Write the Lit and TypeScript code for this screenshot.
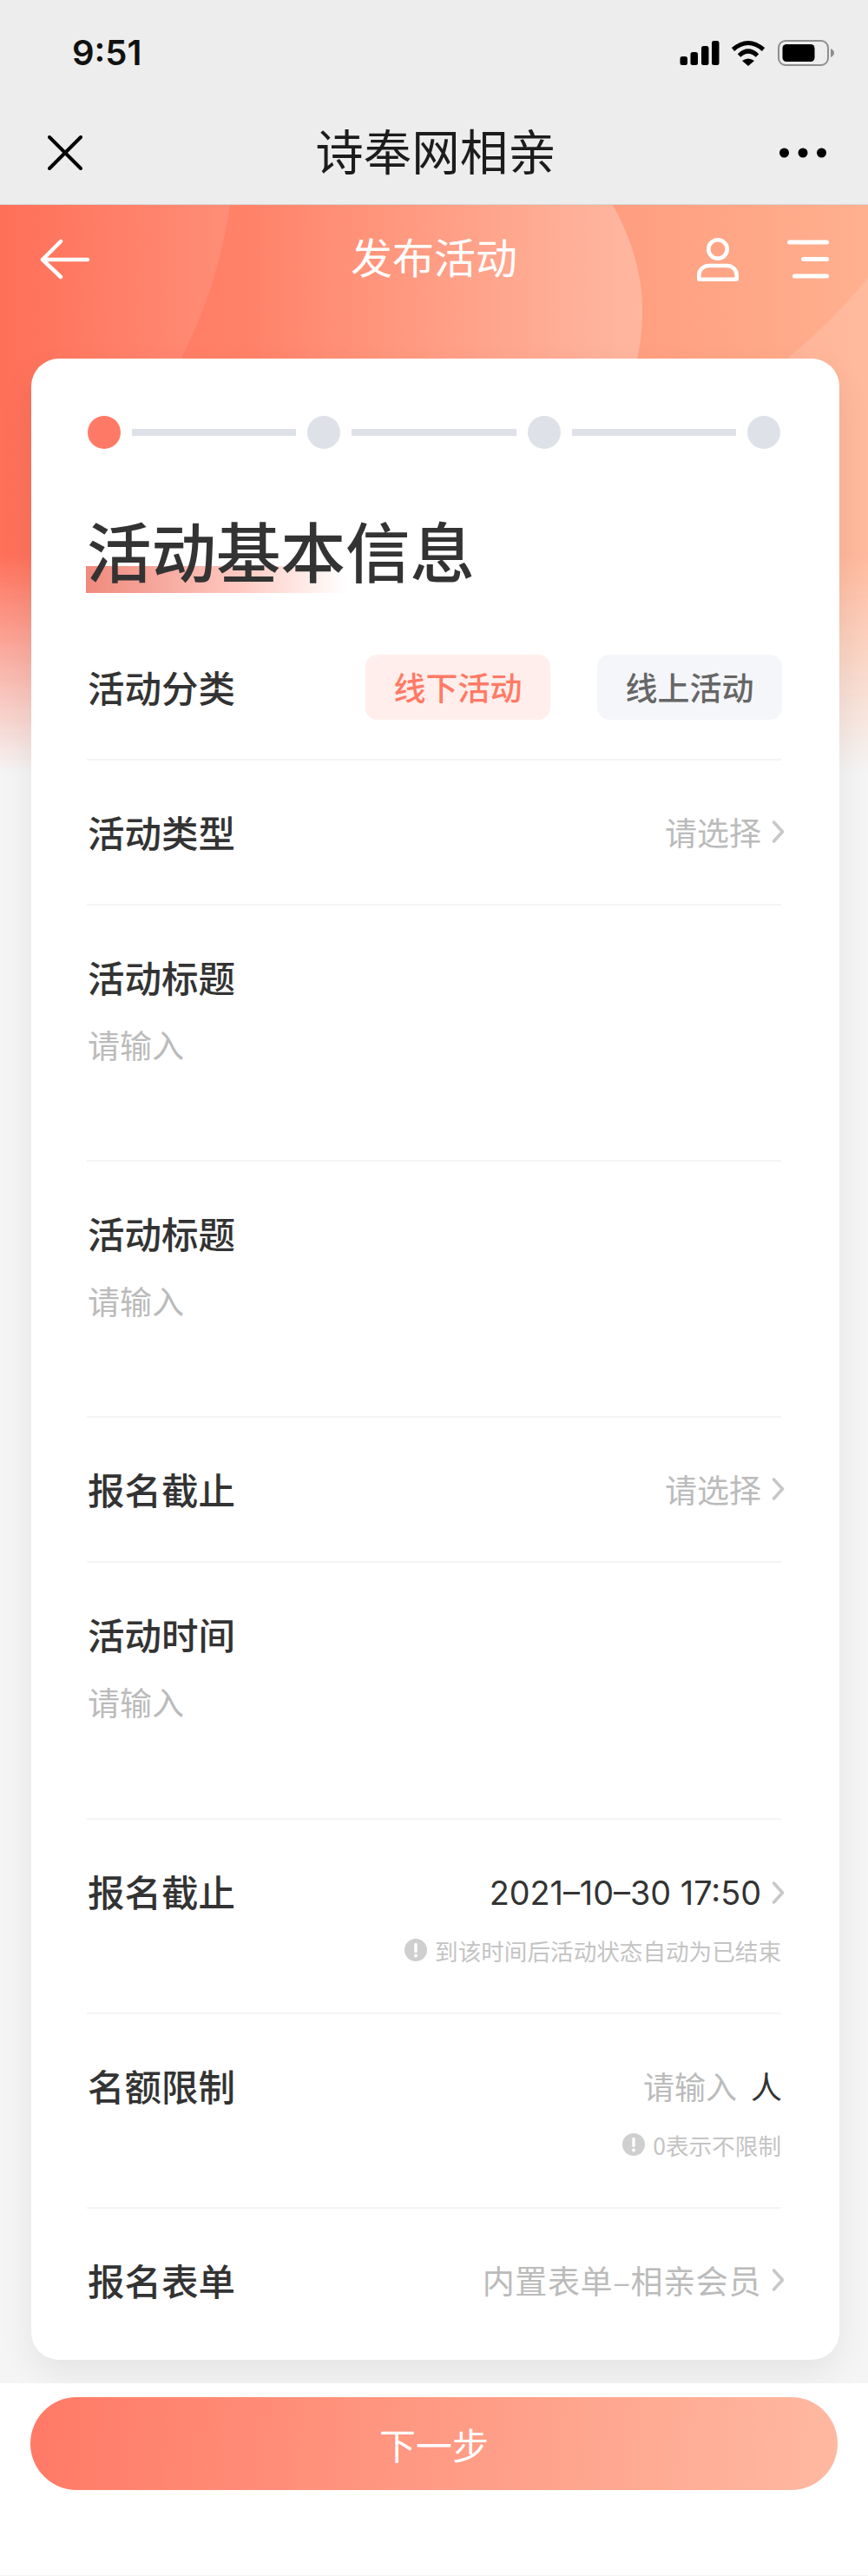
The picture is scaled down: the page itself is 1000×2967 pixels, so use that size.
import { LitElement, html, css, svg } from "lit";
import { customElement } from "lit/decorators.js";

const chevron = html`<svg class="chev" width="15" height="26" viewBox="0 0 15 26"><path d="M2.5 2 L12.5 13 L2.5 24" fill="none" stroke="#c8c8c8" stroke-width="3.6" stroke-linecap="round" stroke-linejoin="round"/></svg>`;
const alertIcon = html`<svg class="alert" width="26" height="26" viewBox="0 0 26 26"><circle cx="13" cy="13" r="13" fill="#cfcfcf"/><path d="M13 6.5 V14.5" stroke="#fff" stroke-width="3.4" stroke-linecap="round"/><circle cx="13" cy="19.5" r="2" fill="#fff"/></svg>`;

@customElement("app-root")
export class AppRoot extends LitElement {
  static styles = css`
    :host {
      display: block;
      width: 1000px;
      min-height: 2967px;
      background: #f5f5f5;
      font-family: "Noto Sans CJK SC", "Noto Sans", sans-serif;
      color: #333;
    }
    * { box-sizing: border-box; }
    .top { background: #ededed; border-bottom: 1px solid #d8d8d8; height: 236px; }
    .status { height: 122px; display: flex; align-items: center; justify-content: space-between; padding: 0 38px 0 83px; }
    .time { font-family: Inter, "Liberation Sans", sans-serif; font-size: 40px; font-weight: 600; color: #111; line-height: 1; }
    .sys { display: flex; align-items: center; }
    .sys .wifi { margin-left: 13px; }
    .sys .batt { margin-left: 14px; }
    .wx { height: 108px; display: grid; grid-template-columns: 1fr auto 1fr; align-items: center; padding: 0 48px 0 55px; }
    .wx-title { font-size: 55.5px; line-height: 70px; color: #1c1c1c; margin: -8px 3px 0 0; }
    .wx .more { justify-self: end; }
    .page { position: relative; }
    .hero { position: absolute; left: 0; top: 0; width: 1000px; height: 654px;
      -webkit-mask-image: linear-gradient(to bottom, #000 0, #000 404px, transparent 654px);
      mask-image: linear-gradient(to bottom, #000 0, #000 404px, transparent 654px); }
    .hero svg { display: block; }
    .content { position: relative; }
    .nav { height: 126px; display: grid; grid-template-columns: 1fr auto 1fr; align-items: center; padding: 0 45px; margin-bottom: 51px; }
    .nav-title { font-size: 48px; color: #fff; line-height: 60px; margin-top: -10px; }
    .nav-right { justify-self: end; display: flex; align-items: center; gap: 56px; }
    .card { width: 931px; margin-left: 36px; background: #fff; border-radius: 32px;
      padding: 66px 67px 63px 64px; box-shadow: 0 16px 40px rgba(0,0,0,.07); }
    .stepper { display: flex; align-items: center; gap: 13px; margin: 0 1px; }
    .dot { width: 38px; height: 38px; border-radius: 50%; background: #dfe1e9; flex: none; }
    .dot.on { background: #ff7a66; }
    .bar { flex: 1; height: 8px; background: #dfe1e9; }
    .title { position: relative; isolation: isolate; margin-top: 66px; margin-bottom: 3px; font-size: 74.5px; line-height: 100px; font-weight: 500; color: #333; }
    .title::before { content: ""; position: absolute; z-index: -1; left: -1px; bottom: 0; width: 300px; height: 31px;
      background: linear-gradient(90deg, #ef8a7c, rgba(255,150,135,.5) 60%, rgba(255,255,255,0)); }
    .row { border-bottom: 2px solid #f4f4f4; padding-top: 53px; }
    .label { font-size: 42.5px; font-weight: 500; line-height: 58px; color: #333; margin-left: 1px; }
    .row.row1 { display: flex; align-items: center; justify-content: space-between; padding: 68px 0 45px; }
    .row1 .label { margin-top: -2px; }
    .tabs { display: flex; gap: 54px; margin-right: -1px; }
    .tab { width: 213px; height: 75px; border-radius: 14px; display: flex; align-items: center; justify-content: center;
      padding-bottom: 2px; font-size: 37px; font-weight: 500; background: #f5f6fa; color: #666; }
    .tab.on { background: #ffeeeb; color: #ff7a66; }
    .line { display: flex; align-items: center; justify-content: space-between; }
    .short { height: 167px; }
    .tall { height: 295px; }
    .tall.more { height: 296px; }
    .mid { height: 224px; }
    .last { border-bottom: 0; }
    .ph { font-size: 37px; line-height: 50px; color: #bbb; margin: 24px 0 0 1px; }
    .val { display: flex; align-items: center; font-size: 37px; color: #bbb; line-height: 58px; }
    .chev { margin: 0 -4px 0 12px; flex: none; }
    .val.date { font-family: Inter, "Liberation Sans", sans-serif; font-size: 37.8px; color: #333; line-height: 54px; padding-top: 4px; }
    .val.input { font-size: 36px; margin-right: -1px; }
    .val.wide { letter-spacing: .6px; }
    .unit { color: #333; margin-left: 16px; }
    .hint { display: flex; align-items: center; justify-content: flex-end; margin-top: 21px; height: 36px; font-size: 26.6px; color: #c4c4c4; }
    .alert { margin-right: 9px; flex: none; }
    .footer { margin-top: 27px; background: #fff; height: 221px; padding: 16px 35px 0; position: relative; }
    .next { height: 107px; width: 930px; border-radius: 54px; background: linear-gradient(95deg, #ff7a66, #ffb9a1);
      color: #fff; font-size: 42px; display: flex; align-items: center; justify-content: center; }
  `;

  private field(label: string, right: unknown) {
    return html`<div class="line"><div class="label">${label}</div>${right}</div>`;
  }

  render() {
    return html`
      <div class="top">
        <div class="status">
          <div class="time">9:51</div>
          <div class="sys">
            <svg width="46" height="30" viewBox="0 0 46 30" fill="#000">
              <rect x="0.5" y="19" width="8.5" height="10" rx="2.5"/>
              <rect x="12.5" y="14" width="8.5" height="15" rx="2.5"/>
              <rect x="25" y="7" width="8.5" height="22" rx="2.5"/>
              <rect x="37" y="1" width="8.5" height="28" rx="2.5"/>
            </svg>
            <svg class="wifi" width="40" height="30" viewBox="0 0 40 30">
              <path d="M2.5 11 Q20 -4 37.5 11" fill="none" stroke="#000" stroke-width="5"/>
              <path d="M9.5 18 Q20 8 30.5 18" fill="none" stroke="#000" stroke-width="5"/>
              <path d="M13 24 Q20 19 27 24 L20 30Z" fill="#000"/>
            </svg>
            <svg class="batt" width="66" height="30" viewBox="0 0 66 30">
              <rect x="1" y="1" width="57" height="28" rx="8" fill="none" stroke="#8e8e8e" stroke-width="2"/>
              <rect x="5.5" y="5" width="37" height="20" rx="4.5" fill="#000"/>
              <path d="M61 10 Q65 12 65 15 Q65 18 61 20Z" fill="#8e8e8e"/>
            </svg>
          </div>
        </div>
        <div class="wx">
          <svg width="40" height="40" viewBox="0 0 40 40"><path d="M2 2 L38 38 M38 2 L2 38" stroke="#000" stroke-width="4" stroke-linecap="round"/></svg>
          <div class="wx-title">诗奉网相亲</div>
          <svg class="more" width="54" height="12" viewBox="0 0 54 12" fill="#000"><circle cx="5.5" cy="6" r="5.5"/><circle cx="27" cy="6" r="5.5"/><circle cx="48.5" cy="6" r="5.5"/></svg>
        </div>
      </div>
      <div class="page">
        <div class="hero">
          <svg width="1000" height="654" viewBox="0 0 1000 654">
            <defs>
              <linearGradient id="base" x1="0" x2="1" y1="0" y2="0"><stop offset="0" stop-color="#ff7059"/><stop offset="1" stop-color="#ffb08f"/></linearGradient>
              <linearGradient id="s1" gradientUnits="userSpaceOnUse" x1="20" x2="265" y1="0" y2="0"><stop offset="0" stop-color="#fff" stop-opacity="0"/><stop offset="1" stop-color="#fff" stop-opacity=".1"/></linearGradient>
              <linearGradient id="s2" gradientUnits="userSpaceOnUse" x1="290" x2="740" y1="0" y2="0"><stop offset="0" stop-color="#fff" stop-opacity="0"/><stop offset="1" stop-color="#fff" stop-opacity=".25"/></linearGradient>
            </defs>
            ${svg`
              <rect width="1000" height="654" fill="url(#base)"/>
              <path d="M0 0 H265 C250 100 205 240 36 404 L0 430 Z" fill="url(#s1)"/>
              <path d="M200 0 H706 C728 40 740 80 740 121 C740 140 738 160 734 177 L734 400 H200 Z" fill="url(#s2)"/>
              <path d="M1000 84 C970 120 940 150 907 177 L850 300 V654 H1000 Z" fill="#fff" fill-opacity=".13"/>
            `}
          </svg>
        </div>
        <div class="content">
          <div class="nav">
            <svg width="60" height="48" viewBox="0 0 60 48"><path d="M25 3 L4 24 L25 44 M4 24 H56" fill="none" stroke="#fff" stroke-width="4.5" stroke-linecap="round" stroke-linejoin="round"/></svg>
            <div class="nav-title">发布活动</div>
            <div class="nav-right">
              <svg width="48" height="50" viewBox="0 0 48 50" fill="none" stroke="#fff" stroke-width="4.6"><circle cx="24" cy="13" r="10.7"/><path d="M2.3 47.7 V43 C2.3 36 8 32 14 32 H34 C40 32 45.7 36 45.7 43 V47.7 Z" stroke-linejoin="round"/></svg>
              <svg width="48" height="46" viewBox="0 0 48 46" stroke="#fff" stroke-width="5.2" stroke-linecap="round"><path d="M2.6 3 H45.4 M18.6 22.5 H45.4 M8.6 42 H45.4"/></svg>
            </div>
          </div>
          <div class="card">
            <div class="stepper">
              <div class="dot on"></div><div class="bar"></div>
              <div class="dot"></div><div class="bar"></div>
              <div class="dot"></div><div class="bar"></div>
              <div class="dot"></div>
            </div>
            <div class="title">活动基本信息</div>
            <div class="row row1">
              <div class="label">活动分类</div>
              <div class="tabs"><div class="tab on">线下活动</div><div class="tab">线上活动</div></div>
            </div>
            <div class="row short">${this.field("活动类型", html`<div class="val">请选择${chevron}</div>`)}</div>
            <div class="row tall"><div class="label">活动标题</div><div class="ph">请输入</div></div>
            <div class="row tall"><div class="label">活动标题</div><div class="ph">请输入</div></div>
            <div class="row short">${this.field("报名截止", html`<div class="val">请选择${chevron}</div>`)}</div>
            <div class="row tall more"><div class="label">活动时间</div><div class="ph">请输入</div></div>
            <div class="row mid">
              ${this.field("报名截止", html`<div class="val date">2021–10–30 17:50${chevron}</div>`)}
              <div class="hint">${alertIcon}到该时间后活动状态自动为已结束</div>
            </div>
            <div class="row mid">
              ${this.field("名额限制", html`<div class="val input">请输入<span class="unit">人</span></div>`)}
              <div class="hint">${alertIcon}0表示不限制</div>
            </div>
            <div class="row last">${this.field("报名表单", html`<div class="val wide">内置表单–相亲会员${chevron}</div>`)}</div>
          </div>
          <div class="footer"><div class="next">下一步</div></div>
        </div>
      </div>
    `;
  }
}
